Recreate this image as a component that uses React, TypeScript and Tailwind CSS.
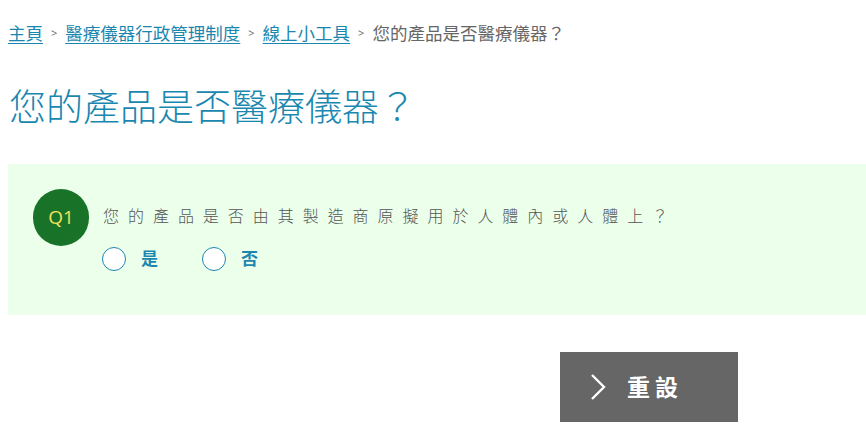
import React from "react";

const cjk = { fontFamily: '"Open Sans", "Noto Sans CJK TC", sans-serif' };

export default function App() {
  return (
    <div className="w-[866px] h-[442px] bg-white overflow-hidden" style={cjk}>
      <nav className="flex items-center gap-[8px] pl-[8px] pt-[21px] text-[17.5px] leading-[24px]">
        <a href="#" className="text-[#1a87b0] underline underline-offset-[3px]">主頁</a>
        <span className="text-[11px] text-[#666]">&gt;</span>
        <a href="#" className="text-[#1a87b0] underline underline-offset-[3px]">醫療儀器行政管理制度</a>
        <span className="text-[11px] text-[#666]">&gt;</span>
        <a href="#" className="text-[#1a87b0] underline underline-offset-[3px]">線上小工具</a>
        <span className="text-[11px] text-[#666]">&gt;</span>
        <span className="text-[#666]">您的產品是否醫療儀器？</span>
      </nav>

      <h1 className="pl-[9px] mt-[40px] text-[37px] leading-[44px] font-light text-[#1a87b0]">
        您的產品是否醫療儀器？
      </h1>

      <section className="ml-[8px] mt-[35px] h-[151px] bg-[#ebffeb] flex gap-[14px] pl-[25px] pt-[25px]">
        <div className="w-[56px] h-[57px] rounded-full bg-[#187328] flex items-center justify-center text-[19px] text-[#f2e05e]">
          Q1
        </div>
        <div className="pt-[16px]">
          <p className="text-[16px] leading-[22px] tracking-[0.56em] font-light text-[#555]">
            您的產品是否由其製造商原擬用於人體內或人體上？
          </p>
          <div className="flex items-center mt-[19px] -ml-[1px]">
            <label className="flex items-center gap-[15px] w-[100px]">
              <span className="w-[24px] h-[24px] rounded-full border border-[#1a87b0] bg-white" />
              <span className="text-[17px] font-bold text-[#1a87b0]">是</span>
            </label>
            <label className="flex items-center gap-[15px]">
              <span className="w-[24px] h-[24px] rounded-full border border-[#1a87b0] bg-white" />
              <span className="text-[17px] font-bold text-[#1a87b0]">否</span>
            </label>
          </div>
        </div>
      </section>

      <div className="flex justify-start pl-[560px] mt-[37px]">
        <button className="w-[178px] h-[70px] bg-[#666] flex items-center pl-[30px] text-white">
          <svg width="16" height="26" viewBox="0 0 16 26" fill="none" stroke="white" strokeWidth="2.4">
            <path d="M2 1 L14 13 L2 25" />
          </svg>
          <span className="ml-[21px] text-[23px] font-bold tracking-[0.22em]">重設</span>
        </button>
      </div>
    </div>
  );
}
